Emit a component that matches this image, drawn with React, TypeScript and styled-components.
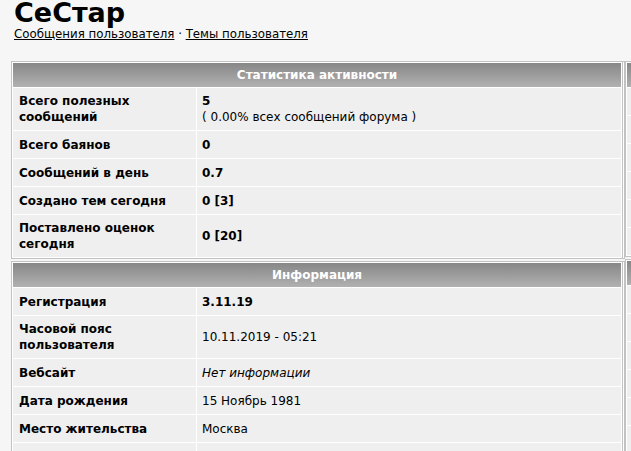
import React from "react";
import styled, { createGlobalStyle } from "styled-components";

const GlobalStyle = createGlobalStyle`
  html, body {
    margin: 0;
    padding: 0;
    background: #f6f6f6;
    overflow: hidden;
  }
  body {
    font-family: "DejaVu Sans", Verdana, sans-serif;
    font-size: 12px;
    color: #000;
  }
`;

interface Row {
    label: string;
    value: string;
    note?: string;
    bold?: boolean;
    italic?: boolean;
}

const activity: Row[] = [
    { label: "Всего полезных сообщений", value: "5", note: "( 0.00% всех сообщений форума )", bold: true },
    { label: "Всего баянов", value: "0", bold: true },
    { label: "Сообщений в день", value: "0.7", bold: true },
    { label: "Создано тем сегодня", value: "0 [3]", bold: true },
    { label: "Поставлено оценок сегодня", value: "0 [20]", bold: true },
];

const info: Row[] = [
    { label: "Регистрация", value: "3.11.19", bold: true },
    { label: "Часовой пояс пользователя", value: "10.11.2019 - 05:21" },
    { label: "Вебсайт", value: "Нет информации", italic: true },
    { label: "Дата рождения", value: "15 Ноябрь 1981" },
    { label: "Место жительства", value: "Москва" },
    // row continues below the visible frame
    { label: "", value: "" },
];

function StatPanel({ title, rows }: { title: string; rows: Row[] }) {
    return (
        <Panel>
            <PanelHeader>{title}</PanelHeader>
            {rows.map((row, i) => (
                <React.Fragment key={i}>
                    <LabelCell>{row.label}</LabelCell>
                    <ValueCell>
                        <Value bold={row.bold} italic={row.italic}>{row.value}</Value>
                        {row.note && <span>{row.note}</span>}
                    </ValueCell>
                </React.Fragment>
            ))}
        </Panel>
    );
}

function SidePanel({ rows }: { rows: number }) {
    return (
        <SideBox>
            <PanelHeader />
            {Array.from({ length: rows }).map((_, i) => (
                <SideCell key={i} />
            ))}
        </SideBox>
    );
}

function App() {
    return (
        <>
            <GlobalStyle />
            <Page>
                <Heading>
                    <Title>СеСтар</Title>
                    <Links>
                        <Link href="#">Сообщения пользователя</Link>
                        {" · "}
                        <Link href="#">Темы пользователя</Link>
                    </Links>
                </Heading>
                <Columns>
                    <MainColumn>
                        <StatPanel title="Статистика активности" rows={activity} />
                        <StatPanel title="Информация" rows={info} />
                    </MainColumn>
                    <SideColumn>
                        <SidePanel rows={6} />
                        <SidePanel rows={6} />
                    </SideColumn>
                </Columns>
            </Page>
        </>
    );
}

const Page = styled.div`
  padding-left: 11px;
`;

const Heading = styled.div`
  padding-left: 3px;
  margin-bottom: 19px;
`;

const Title = styled.h1`
  margin: 0;
  font-size: 27px;
  line-height: 26px;
  font-weight: bold;
`;

const Links = styled.div`
  line-height: 16px;
  font-size: 11.8px;
`;

const Link = styled.a`
  color: #000;
  text-decoration: underline;
`;

const Columns = styled.div`
  display: flex;
  align-items: flex-start;
`;

const MainColumn = styled.div`
  display: flex;
  flex-direction: column;
  gap: 2px;
  width: 614px;
  flex-shrink: 0;
`;

const SideColumn = styled.div`
  display: flex;
  flex-direction: column;
  gap: 2px;
  width: 300px;
  flex-shrink: 0;
`;

const Panel = styled.div`
  display: grid;
  grid-template-columns: 183px 424px;
  gap: 1px;
  padding: 1px;
  background: #fff;
  border: 1px solid #c2c2c2;
  border-right: 3px double #c2c2c2;
`;

const SideBox = styled.div`
  display: flex;
  flex-direction: column;
  gap: 1px;
  padding: 1px;
  background: #fff;
  border: 1px solid #c2c2c2;
`;

const PanelHeader = styled.div`
  grid-column: 1 / -1;
  height: 24px;
  line-height: 24px;
  text-align: center;
  font-weight: bold;
  color: #fff;
  background: linear-gradient(#878787, #b1b1b1);
`;

const Cell = styled.div`
  background: #efefef;
  padding: 5px 6px;
  min-height: 17px;
  line-height: 16px;
  display: flex;
  flex-direction: column;
  justify-content: center;
`;

const LabelCell = styled(Cell)`
  font-weight: bold;
`;

const ValueCell = styled(Cell)`
  padding-left: 5px;
`;

const SideCell = styled.div`
  background: #efefef;
  height: 27px;
`;

const Value = styled.span<{ bold?: boolean; italic?: boolean }>`
  font-weight: ${(p) => (p.bold ? "bold" : "normal")};
  font-style: ${(p) => (p.italic ? "italic" : "normal")};
`;

export default App;
